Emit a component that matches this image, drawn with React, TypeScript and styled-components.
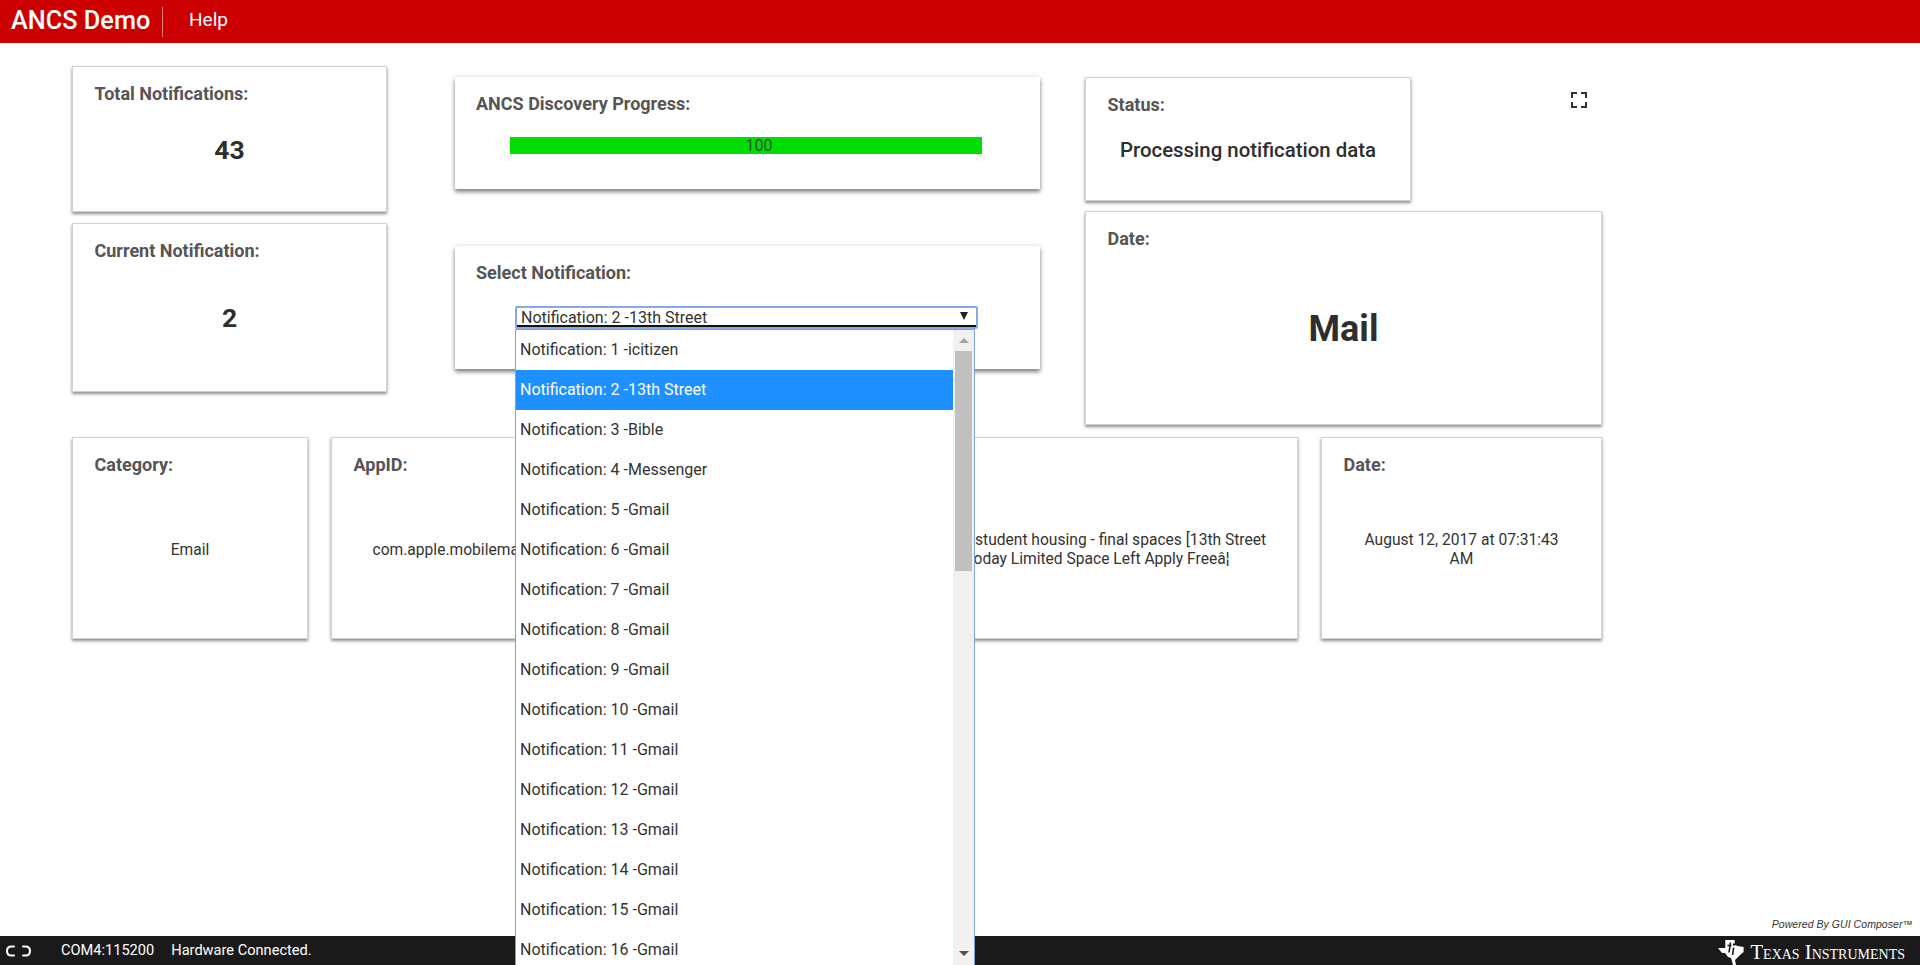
import React from "react";
import styled, { createGlobalStyle } from "styled-components";

const Global = createGlobalStyle`
  html, body { margin: 0; padding: 0; height: 100%; overflow: hidden; background: #fff; }
  body { font-family: Roboto, "Liberation Sans", sans-serif; color: #333; }
  * { box-sizing: border-box; }
`;

const Page = styled.div`
  height: 965px;
  display: flex;
  flex-direction: column;
  position: relative;
  overflow: hidden;
`;

const Header = styled.header`
  flex: none;
  height: 43px;
  background: #cc0000;
  color: #fff;
  display: flex;
  align-items: center;
  padding-left: 11px;
`;

const AppName = styled.div`
  font-size: 25.3px;
  font-weight: 500;
  width: 152px;
  height: 30px;
  line-height: 28px;
  border-right: 1px solid #e58080;
`;

const MenuItem = styled.div`
  font-size: 19px;
  margin-left: 26px;
  margin-top: -4px;
`;

const Main = styled.main`
  flex: 1;
  min-height: 0;
  padding: 23px 0 0 72px;
  display: flex;
  flex-direction: column;
`;

const TopArea = styled.div`
  display: flex;
  align-items: flex-start;
`;

const Column = styled.div<{ $top: number; $gap: number; $w: number; $left: number }>`
  display: flex;
  flex-direction: column;
  flex: none;
  width: ${(p) => p.$w}px;
  margin-left: ${(p) => p.$left}px;
  padding-top: ${(p) => p.$top}px;
  row-gap: ${(p) => p.$gap}px;
`;

const Card = styled.section<{ $h: number; $w?: number; $soft?: boolean }>`
  height: ${(p) => p.$h}px;
  ${(p) => (p.$w ? `width: ${p.$w}px;` : "")}
  background: #fff;
  border: 1px solid ${(p) => (p.$soft ? "#fff" : "#d2d2d2")};
  box-shadow: ${(p) =>
    p.$soft
      ? "0 3px 4px rgba(0,0,0,.45), 0 0 6px rgba(0,0,0,.12)"
      : "0 2px 3px rgba(0,0,0,.45)"};
  padding: ${(p) => (p.$soft ? "16px 20px 0" : "17px 21.5px 0")};
  display: flex;
  flex-direction: column;
`;

const Label = styled.div`
  font-size: 18px;
  line-height: 20px;
  font-weight: 700;
  color: #555;
`;

const Value = styled.div<{ $gap: number; $size: number; $lh: number; $weight: number }>`
  margin-top: ${(p) => p.$gap}px;
  font-size: ${(p) => p.$size}px;
  line-height: ${(p) => p.$lh}px;
  font-weight: ${(p) => p.$weight};
  color: #2e2e2e;
  text-align: center;
`;

const BodyText = styled.div<{ $shift?: number; $inset?: number; $lift?: number; $back?: number }>`
  flex: 1;
  display: flex;
  align-items: center;
  justify-content: center;
  text-align: center;
  font-size: 15.6px;
  line-height: 19px;
  color: #333;
  padding-bottom: ${(p) => 12 + (p.$lift ?? 0)}px;
  padding-left: ${(p) => (p.$shift ?? 0) + (p.$inset ?? 0)}px;
  padding-right: ${(p) => (p.$inset ?? 0) + (p.$back ?? 0)}px;
`;

const BarTrack = styled.div`
  margin: 23px 37px 0 34px;
  height: 17px;
  background: #00dd00;
  color: #2c4f2c;
  font-size: 16px;
  line-height: 17px;
  text-align: center;
  padding-left: 26px;
`;

const SelectWrap = styled.div`
  position: relative;
  margin: 23px 0 0 39px;
  width: 463px;
`;

const SelectBox = styled.div`
  height: 23px;
  border: 2px solid #86a9ec;
  border-radius: 2px;
  background: #fff;
  position: relative;
  font-size: 16px;
  line-height: 19px;
  padding-left: 4px;
  color: #333;
  display: flex;
  justify-content: space-between;
  &::after {
    content: "";
    position: absolute;
    left: 0;
    right: 0;
    bottom: 0;
    border-bottom: 2px solid #111;
  }
`;

const Caret = styled.span`
  width: 0;
  height: 0;
  border-left: 4px solid transparent;
  border-right: 4px solid transparent;
  border-top: 8px solid #222;
  margin: 4px 8px 0 0;
`;

const Dropdown = styled.div`
  position: absolute;
  left: 0;
  top: 23px;
  width: 460px;
  height: 636px;
  background: #fff;
  border-left: 1px solid #7f9fe0;
  border-right: 1px solid #7f9fe0;
  border-top: 1px solid #7f9fe0;
  display: flex;
  z-index: 10;
  overflow: hidden;
`;

const OptionList = styled.div`
  flex: 1;
  min-width: 0;
`;

const Option = styled.div<{ $active?: boolean }>`
  height: 40px;
  line-height: 40px;
  padding-left: 4px;
  font-size: 16px;
  color: ${(p) => (p.$active ? "#fff" : "#333")};
  background: ${(p) => (p.$active ? "#1e90ff" : "#fff")};
  white-space: nowrap;
`;

const Scrollbar = styled.div`
  flex: none;
  width: 21px;
  background: #f1f1f1;
  display: flex;
  flex-direction: column;
  align-items: center;
  position: relative;
`;

const ScrollThumb = styled.div`
  margin-top: 21px;
  width: 17px;
  height: 220px;
  background: #c0c0c0;
`;

const ScrollArrow = styled.div<{ $down?: boolean }>`
  position: absolute;
  ${(p) => (p.$down ? "bottom: 9px;" : "top: 8px;")}
  width: 0;
  height: 0;
  border-left: 5px solid transparent;
  border-right: 5px solid transparent;
  ${(p) =>
    p.$down ? "border-top: 5px solid #505050;" : "border-bottom: 5px solid #a3a3a3;"}
`;

const StatusRow = styled.div`
  display: flex;
  align-items: flex-start;
  justify-content: space-between;
  padding: 0 15px 0 0;
`;

const FullscreenButton = styled.div`
  margin-top: 15px;
  width: 16px;
  height: 16px;
  display: flex;
`;

const BottomRow = styled.div`
  margin-top: 12px;
  display: grid;
  grid-template-columns: 236px 240px 704px 281px;
  column-gap: 23px;
`;

const PoweredBy = styled.div`
  position: absolute;
  right: 7px;
  bottom: 35px;
  font-family: "Liberation Sans", Arial, sans-serif;
  font-style: italic;
  font-size: 10.5px;
  letter-spacing: 0.05px;
  line-height: 12px;
  color: #333;
`;

const Footer = styled.footer`
  flex: none;
  height: 29px;
  background: #1a1a1a;
  color: #fff;
  display: flex;
  align-items: center;
  padding-left: 6px;
  font-size: 14.6px;
`;

const PortText = styled.span`
  margin: -1px 0 0 30px;
`;

const StatusText = styled.span`
  margin: -1px 0 0 17px;
`;

const Brand = styled.div`
  margin-left: auto;
  margin-right: 15px;
  display: flex;
  align-items: center;
  column-gap: 7px;
  height: 29px;
`;

const BrandName = styled.span`
  font-family: "Liberation Serif", "Times New Roman", serif;
  font-variant: small-caps;
  font-size: 20.6px;
  line-height: 20px;
  margin-top: 2px;
  color: #fff;
`;

const LogoSlot = styled.span`
  display: flex;
  margin-top: 4px;
`;

const names = [
  "icitizen", "13th Street", "Bible", "Messenger", "Gmail", "Gmail", "Gmail", "Gmail",
  "Gmail", "Gmail", "Gmail", "Gmail", "Gmail", "Gmail", "Gmail", "Gmail",
];

const ExpandIcon = () => (
  <svg width="16" height="16" viewBox="0 0 16 16" fill="none" stroke="#333" strokeWidth="2">
    <path d="M1 6V1H6M10 1H15V6M15 10V15H10M6 15H1V10" />
  </svg>
);

const LinkIcon = () => (
  <svg width="25" height="12" viewBox="0 0 25 12" fill="none" stroke="#fff" strokeWidth="2" strokeLinecap="round">
    <path d="M8 1.5H5.5C2.5 1.5 1 3.5 1 6S2.5 10.5 5.5 10.5H8" />
    <path d="M17 1.5H19.5C22.5 1.5 24 3.5 24 6S22.5 10.5 19.5 10.5H17" />
  </svg>
);

const TiLogo = () => (
  <svg width="26" height="25" viewBox="0 0 26 25">
    <path
      fill="#fff"
      d="M7.3 0H16.7V5L20 6 25.6 7V12L22 15 17 20 18 25H15L13 18 10 17 7 13H4L0 8H7.3Z"
    />
    <path
      fill="none"
      stroke="#1a1a1a"
      strokeWidth="1.6"
      d="M12.5 2.5L11 12.5M9.5 5.5H13.5M15.6 7.5L14.6 15"
    />
    <path fill="#1a1a1a" d="M15 3.5H17V5.5H15Z" />
  </svg>
);

export default function App() {
  return (
    <Page>
      <Global />
      <Header>
        <AppName>ANCS Demo</AppName>
        <MenuItem>Help</MenuItem>
      </Header>
      <Main>
        <TopArea>
          <Column $w={315} $left={0} $top={0} $gap={11}>
            <Card $h={146}>
              <Label>Total Notifications:</Label>
              <Value $gap={29} $size={26.5} $lh={34} $weight={700}>43</Value>
            </Card>
            <Card $h={169}>
              <Label>Current Notification:</Label>
              <Value $gap={40} $size={26.5} $lh={34} $weight={700}>2</Value>
            </Card>
          </Column>
          <Column $w={585} $left={68} $top={11} $gap={57}>
            <Card $h={112} $soft>
              <Label>ANCS Discovery Progress:</Label>
              <BarTrack>100</BarTrack>
            </Card>
            <Card $h={123} $soft>
              <Label>Select Notification:</Label>
              <SelectWrap>
                <SelectBox>
                  Notification: 2 -13th Street
                  <Caret />
                </SelectBox>
                <Dropdown>
                  <OptionList>
                    {names.map((n, i) => (
                      <Option key={i} $active={i === 1}>
                        Notification: {i + 1} -{n}
                      </Option>
                    ))}
                  </OptionList>
                  <Scrollbar>
                    <ScrollArrow />
                    <ScrollThumb />
                    <ScrollArrow $down />
                  </Scrollbar>
                </Dropdown>
              </SelectWrap>
            </Card>
          </Column>
          <Column $w={517} $left={45} $top={11} $gap={10}>
            <StatusRow>
              <Card $h={124} $w={326}>
                <Label>Status:</Label>
                <Value $gap={23} $size={20.4} $lh={24} $weight={500}>Processing notification data</Value>
              </Card>
              <FullscreenButton>
                <ExpandIcon />
              </FullscreenButton>
            </StatusRow>
            <Card $h={214}>
              <Label>Date:</Label>
              <Value $gap={58} $size={36} $lh={44} $weight={700}>Mail</Value>
            </Card>
          </Column>
        </TopArea>
        <BottomRow>
          <Card $h={202}>
            <Label>Category:</Label>
            <BodyText>Email</BodyText>
          </Card>
          <Card $h={202}>
            <Label>AppID:</Label>
            <BodyText $back={3}>com.apple.mobilemail</BodyText>
          </Card>
          <Card $h={202}>
            <Label>Title:</Label>
            <BodyText $shift={269} $lift={1}>
              13th Street student housing - final spaces [13th Street
              <br />
              Join Today Limited Space Left Apply Freeâ¦
            </BodyText>
          </Card>
          <Card $h={202}>
            <Label>Date:</Label>
            <BodyText $inset={10} $lift={1}>August 12, 2017 at 07:31:43 AM</BodyText>
          </Card>
        </BottomRow>
      </Main>
      <PoweredBy>Powered By GUI Composer™</PoweredBy>
      <Footer>
        <LinkIcon />
        <PortText>COM4:115200</PortText>
        <StatusText>Hardware Connected.</StatusText>
        <Brand>
          <LogoSlot>
            <TiLogo />
          </LogoSlot>
          <BrandName>Texas Instruments</BrandName>
        </Brand>
      </Footer>
    </Page>
  );
}
